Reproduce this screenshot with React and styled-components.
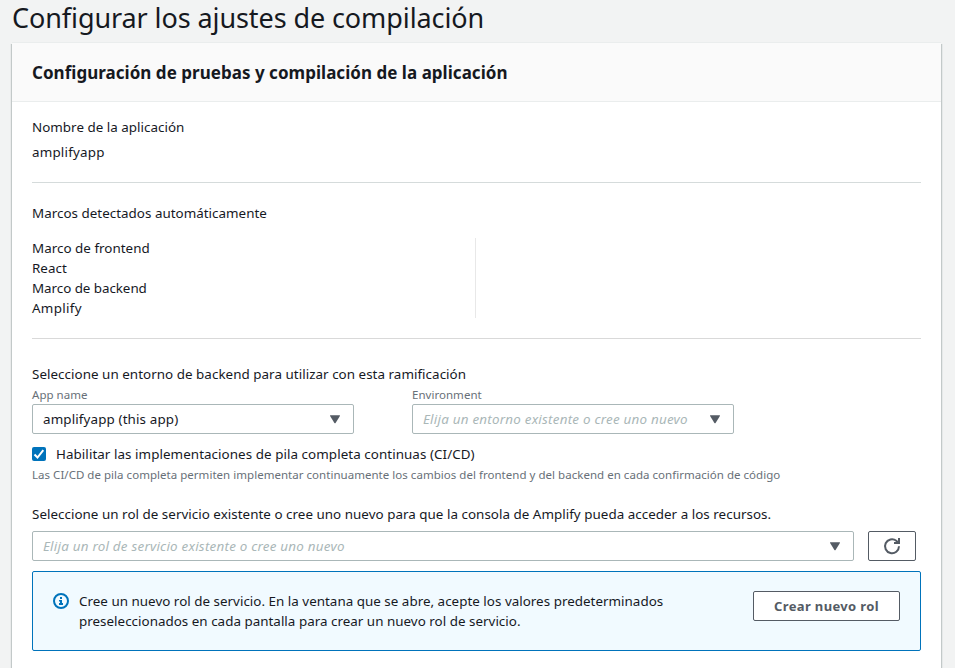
import React from 'react';
import styled, { createGlobalStyle } from 'styled-components';

const GlobalStyle = createGlobalStyle`
  * { box-sizing: border-box; }
  body {
    margin: 0;
    background: #f2f3f3;
    color: #16191f;
    font: 13.4px/20px "Noto Sans", "Open Sans", sans-serif;
    letter-spacing: 0.02px;
  }
`;

const Page = styled.main`
  height: 100vh;
  overflow: hidden;
  display: flex;
  flex-direction: column;
  padding: 0 14px 0 12px;
`;

const Title = styled.h1`
  margin: 0;
  flex: none;
  height: 43px;
  font-size: 27px;
  line-height: 35px;
  font-weight: 400;
  letter-spacing: -0.09px;
`;

const Panel = styled.section`
  flex: 1;
  background: #fff;
  box-shadow: 0 -1px 0 0 #eaeded, 1px 1px 0 0 #c3c9c9, -1px 1px 0 0 #c3c9c9, 2px 1px 0 0 #e6e9e9,
    -2px 1px 0 0 #e9ebeb;
`;

const PanelHeader = styled.header`
  height: 59px;
  padding: 0 20px;
  background: #fafafa;
  border-bottom: 1px solid #eaeded;
`;

const PanelTitle = styled.h2`
  margin: 0;
  font-size: 17px;
  line-height: 59px;
  font-weight: 700;
  letter-spacing: 0.03px;
`;

const PanelBody = styled.div`
  padding: 15px 20px;
`;

const Text = styled.div`
  height: 20px;
  white-space: nowrap;
  letter-spacing: ${(p) => p.$spacing || '0.02px'};
`;

const AppName = styled(Text)`
  margin-top: 5px;
`;

const Divider = styled.hr`
  height: 1px;
  margin: 20px 0;
  border: 0;
  background: ${(p) => p.$color || '#d5dbdb'};
`;

const Frameworks = styled.div`
  display: grid;
  grid-template-columns: 444px 1fr;
  height: 80px;
  margin-top: 15px;
`;

const FrameworkColumn = styled.div`
  border-right: ${(p) => (p.$divided ? '1px solid #e8e8e8' : '0')};
`;

const BackendSection = styled.section`
  padding-top: 5px;
`;

const FieldRow = styled.div`
  display: flex;
  gap: 58px;
`;

const Field = styled.div`
  width: 322px;
`;

const Hint = styled.div`
  height: 20px;
  font-size: 11.5px;
  line-height: 22px;
  color: #687078;
  white-space: nowrap;
  letter-spacing: 0.03px;
`;

const SelectBox = styled.div`
  display: flex;
  align-items: center;
  justify-content: space-between;
  width: ${(p) => p.$width || '322px'};
  height: 30px;
  padding: 0 12px 0 10px;
  background: #fff;
  border: 1px solid #aab7b8;
  border-radius: 2px;
  white-space: nowrap;
`;

const SelectValue = styled.span`
  letter-spacing: 0.13px;
`;

const Placeholder = styled.span`
  color: #aab7b8;
  font-style: italic;
  letter-spacing: 0.23px;
`;

const CheckRow = styled.label`
  display: flex;
  align-items: center;
  gap: 10px;
  height: 20px;
  margin-top: 10px;
`;

const CheckMark = styled.span`
  display: flex;
  width: 14px;
  height: 14px;
  background: #0073bb;
  border-radius: 2px;
`;

const RoleLabel = styled(Text)`
  margin-top: 20px;
`;

const RoleRow = styled.div`
  display: flex;
  gap: 14px;
  margin-top: 7px;
`;

const Button = styled.button`
  display: flex;
  align-items: center;
  justify-content: center;
  flex: none;
  width: ${(p) => p.$width};
  height: 30px;
  padding: 0;
  background: #fff;
  border: 1px solid #545b64;
  border-radius: 2px;
  color: #545b64;
  font: 700 13px/20px "Noto Sans", sans-serif;
  letter-spacing: 0.35px;
`;

const Alert = styled.div`
  display: flex;
  height: 80px;
  margin-top: 10px;
  padding: 19px 20px;
  background: #f1faff;
  border: 1px solid #0073bb;
  border-radius: 2px;
`;

const AlertIcon = styled.span`
  display: flex;
  width: 26px;
  padding-top: 2px;
`;

const AlertText = styled.div`
  flex: 1;
`;

const Caret = () => (
  <svg width="12" height="9" viewBox="0 0 12 9">
    <path d="M1.4 0.3h9.2q.7 0 .3.7L6.6 7.9q-.6.8-1.2 0L1.1 1Q.7.3 1.4.3z" fill="#545b64" />
  </svg>
);

const Select = ({ value, placeholder, width }) => (
  <SelectBox $width={width}>
    {value ? <SelectValue>{value}</SelectValue> : <Placeholder>{placeholder}</Placeholder>}
    <Caret />
  </SelectBox>
);

const RefreshIcon = () => (
  <svg width="18" height="18" viewBox="0 0 18 18" fill="none" stroke="#545b64" strokeWidth="2">
    <path d="M16 9.3A7 7 0 1 1 13.3 3.7L15.5 6" />
    <path d="M11 6h5V1" />
  </svg>
);

const InfoIcon = () => (
  <svg width="16" height="16" viewBox="0 0 16 16">
    <circle cx="8" cy="8" r="7" fill="none" stroke="#0073bb" strokeWidth="2" />
    <path d="M7 4h2v2H7zM6 7h3v3h1v2H6v-2h1V8.5H6z" fill="#0073bb" />
  </svg>
);

export default function App() {
  return (
    <>
      <GlobalStyle />
      <Page>
        <Title>Configurar los ajustes de compilación</Title>
        <Panel>
          <PanelHeader>
            <PanelTitle>Configuración de pruebas y compilación de la aplicación</PanelTitle>
          </PanelHeader>
          <PanelBody>
            <Text>Nombre de la aplicación</Text>
            <AppName $spacing="0.2px">amplifyapp</AppName>
            <Divider />
            <Text>Marcos detectados automáticamente</Text>
            <Frameworks>
              <FrameworkColumn $divided>
                <Text>Marco de frontend</Text>
                <Text>React</Text>
                <Text $spacing="-0.05px">Marco de backend</Text>
                <Text $spacing="0.3px">Amplify</Text>
              </FrameworkColumn>
              <FrameworkColumn />
            </Frameworks>
            <Divider $color="#d9d9d9" />
            <BackendSection>
              <Text $spacing="0.04px">Seleccione un entorno de backend para utilizar con esta ramificación</Text>
              <FieldRow>
                <Field>
                  <Hint>App name</Hint>
                  <Select value="amplifyapp (this app)" />
                </Field>
                <Field>
                  <Hint>Environment</Hint>
                  <Select placeholder="Elija un entorno existente o cree uno nuevo" />
                </Field>
              </FieldRow>
              <CheckRow>
                <CheckMark>
                  <svg width="14" height="14" viewBox="0 0 14 14">
                    <path d="M2.5 7.5l3 3L11.3 3.2" fill="none" stroke="#fff" strokeWidth="2" />
                  </svg>
                </CheckMark>
                <Text $spacing="0.06px">Habilitar las implementaciones de pila completa continuas (CI/CD)</Text>
              </CheckRow>
              <Hint>
                Las CI/CD de pila completa permiten implementar continuamente los cambios del frontend y del backend en cada confirmación de código
              </Hint>
            </BackendSection>
            <RoleLabel $spacing="0.03px">
              Seleccione un rol de servicio existente o cree uno nuevo para que la consola de Amplify pueda acceder a los recursos.
            </RoleLabel>
            <RoleRow>
              <Select width="822px" placeholder="Elija un rol de servicio existente o cree uno nuevo" />
              <Button $width="48px" aria-label="Actualizar">
                <RefreshIcon />
              </Button>
            </RoleRow>
            <Alert>
              <AlertIcon>
                <InfoIcon />
              </AlertIcon>
              <AlertText>
                <Text>Cree un nuevo rol de servicio. En la ventana que se abre, acepte los valores predeterminados</Text>
                <Text>preseleccionados en cada pantalla para crear un nuevo rol de servicio.</Text>
              </AlertText>
              <Button $width="147px">Crear nuevo rol</Button>
            </Alert>
          </PanelBody>
        </Panel>
      </Page>
    </>
  );
}
